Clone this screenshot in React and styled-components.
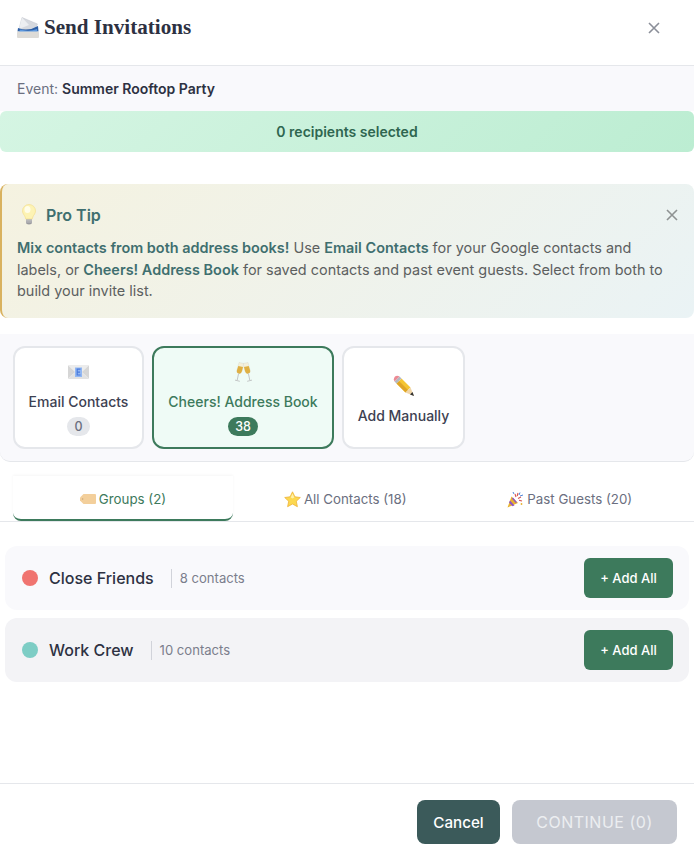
import React from "react";
import styled, { createGlobalStyle } from "styled-components";

const GlobalStyle = createGlobalStyle`
  html, body {
    margin: 0;
    padding: 0;
    background: #fff;
  }
  * {
    box-sizing: border-box;
  }
`;

const Modal = styled.div`
  width: 694px;
  height: 851px;
  display: flex;
  flex-direction: column;
  overflow: hidden;
  font-family: Inter, "Liberation Sans", sans-serif;
  color: #2d3142;
  background: #fff;
`;

const Header = styled.header`
  height: 66px;
  flex: none;
  display: flex;
  align-items: center;
  justify-content: space-between;
  padding: 0 34px 10px 17px;
  border-bottom: 1px solid #e5e7eb;
`;

const Title = styled.h1`
  display: flex;
  align-items: center;
  gap: 5px;
  margin: 0;
  font-family: "Liberation Serif", serif;
  font-size: 21.1px;
  font-weight: 700;
  color: #2d3142;
`;

const CloseButton = styled.button`
  display: flex;
  padding: 0;
  border: none;
  background: none;
  color: ${(p) => p.$color || "#8b8f99"};
`;

const EventBar = styled.div`
  height: 45px;
  flex: none;
  display: flex;
  align-items: center;
  gap: 4px;
  padding: 0 17px;
  background: #f9f9fc;
  font-size: 14px;
  color: #6b6f80;

  strong {
    font-weight: 600;
    color: #2d3142;
  }
`;

const RecipientBanner = styled.div`
  height: 41px;
  flex: none;
  display: flex;
  align-items: center;
  justify-content: center;
  border-radius: 6px;
  background: linear-gradient(135deg, #d5f5e3, #bcedd2);
  font-size: 14px;
  font-weight: 600;
  color: #2f6650;
`;

const TipCard = styled.section`
  height: 134px;
  flex: none;
  margin-top: 32px;
  padding: 8px 40px 0 15px;
  position: relative;
  border-left: 2px solid #d9b25f;
  border-radius: 8px;
  background: linear-gradient(135deg, #f5f2e0, #eaf3f5);
`;

const TipTitle = styled.div`
  display: flex;
  align-items: center;
  gap: 10px;
  height: 45px;
  padding-left: 5px;
  font-size: 16px;
  font-weight: 600;
  color: #3f6f6f;
`;

const TipText = styled.p`
  margin: 0;
  width: 650px;
  font-size: 14.45px;
  line-height: 21.6px;
  color: #5c6060;

  strong {
    font-weight: 600;
    color: #3f6f6f;
  }
`;

const TipClose = styled(CloseButton)`
  position: absolute;
  top: 25px;
  right: 16px;
`;

const SourcePanel = styled.div`
  height: 128px;
  flex: none;
  margin-top: 16px;
  display: flex;
  gap: 8px;
  padding: 12px 13px;
  background: #f9f9fc;
  border-bottom: 1px solid #e5e7eb;
  border-radius: 0 0 10px 10px;
`;

const SourceCard = styled.button`
  width: ${(p) => p.$width}px;
  height: 103px;
  display: flex;
  flex-direction: column;
  align-items: center;
  justify-content: center;
  padding: ${(p) => (p.$plain ? "5px 0 0" : "0")};
  border: 2px solid ${(p) => (p.$active ? "#3d7a5c" : "#e5e7eb")};
  border-radius: 12px;
  background: ${(p) => (p.$active ? "#effbf6" : "#fff")};
  font-family: inherit;
  font-size: 14px;
  font-weight: 500;
  color: ${(p) => (p.$active ? "#3d7a5c" : "#3d4152")};
`;

const SourceIcon = styled.span`
  height: 24px;
  display: flex;
  align-items: center;
  margin-bottom: 8px;
`;

const SourceLabel = styled.span`
  line-height: 20px;
`;

const Badge = styled.span`
  min-width: 23px;
  height: 19px;
  margin-top: 5px;
  padding: 0 7px;
  display: flex;
  align-items: center;
  justify-content: center;
  border-radius: 10px;
  font-size: 12.5px;
  color: ${(p) => (p.$active ? "#fff" : "#6b7080")};
  background: ${(p) => (p.$active ? "#3d7a5c" : "#e5e7eb")};
`;

const TabRow = styled.nav`
  height: 60px;
  flex: none;
  display: grid;
  grid-template-columns: 220px 1fr 1fr;
  align-items: end;
  padding: 0 12px 0 13px;
  border-bottom: 1px solid #e5e7eb;
`;

const Tab = styled.div`
  height: 45px;
  padding-top: 3px;
  display: flex;
  align-items: center;
  justify-content: center;
  gap: 3px;
  font-size: 13.3px;
  color: ${(p) => (p.$active ? "#3d7a5c" : "#6b6f80")};
  border-bottom: 2px solid ${(p) => (p.$active ? "#3d7a5c" : "transparent")};
  border-radius: 0 0 8px 8px;
  box-shadow: ${(p) => (p.$active ? "0 -1px 3px rgba(0,0,0,0.04)" : "none")};
`;

const GroupList = styled.div`
  flex: 1;
  display: flex;
  flex-direction: column;
  gap: 8px;
  padding: 24px 5px 0;
`;

const GroupRow = styled.div`
  height: 64px;
  display: flex;
  align-items: center;
  padding: 0 16px 0 17px;
  border-radius: 12px;
  background: ${(p) => (p.$shade ? "#f3f3f6" : "#f9f9fc")};
`;

const Dot = styled.span`
  width: 16px;
  height: 16px;
  flex: none;
  margin-right: 11px;
  border-radius: 50%;
  background: ${(p) => p.$color};
`;

const GroupName = styled.span`
  font-size: 16px;
  font-weight: 500;
  color: #2d3142;
`;

const GroupCount = styled.span`
  margin-left: 17px;
  padding-left: 8px;
  border-left: 1px solid #d1d3da;
  font-size: 13.1px;
  line-height: 19px;
  color: #7b7e8c;
`;

const AddAllButton = styled.button`
  width: 89px;
  height: 40px;
  margin-left: auto;
  border: none;
  border-radius: 6px;
  background: #3d7a5c;
  font-family: inherit;
  font-size: 13px;
  font-weight: 500;
  color: #fff;
`;

const Footer = styled.footer`
  height: 68px;
  flex: none;
  display: flex;
  justify-content: flex-end;
  gap: 12px;
  padding: 16px 17px 0;
  border-top: 1px solid #e5e7eb;
`;

const FooterButton = styled.button`
  height: 44px;
  width: ${(p) => p.$width}px;
  border: none;
  border-radius: 8px;
  font-family: inherit;
  font-size: ${(p) => (p.$disabled ? "16px" : "15.2px")};
  font-weight: ${(p) => (p.$disabled ? "400" : "500")};
  letter-spacing: ${(p) => (p.$disabled ? "0.5px" : "0")};
  color: ${(p) => (p.$disabled ? "#eceef1" : "#fff")};
  background: ${(p) => (p.$disabled ? "#c5c8d0" : "#3b5a5a")};
`;

const CloseIcon = ({ size = 12 }) => (
  <svg width={size} height={size} viewBox="0 0 12 12" fill="none" stroke="currentColor" strokeWidth="1.6">
    <path d="M1 1l10 10M11 1L1 11" />
  </svg>
);

const InboxIcon = () => (
  <svg width="22" height="21" viewBox="0 0 22 21">
    <path d="M5 0.5L20.500 7 17 14 2 12z" fill="#d5d8de" stroke="#bfc3ca" strokeWidth="0.5" />
    <path d="M5 0.500L12 8 2 12z" fill="#eceef1" />
    <path d="M1 11Q11 15 21 9L21.500 14.500H0.500z" fill="#2d5fa6" />
    <path d="M3 12.500Q12 15 20 12L20.500 15H2z" fill="#5e9ae0" />
    <rect x="0" y="14.500" width="22" height="6.500" rx="1" fill="#dddbd7" />
  </svg>
);

const BulbIcon = () => (
  <svg width="14" height="21" viewBox="0 0 14 21">
    <path d="M7 .5a6.500 6.500 0 0 0-6.500 6.500c0 2.600 1.800 3.800 2.700 6 .3.800.4 1.400.5 2h6.600c.1-.6.200-1.200.5-2 .9-2.200 2.700-3.400 2.700-6A6.500 6.500 0 0 0 7 .5z" fill="#fdf3b4" stroke="#f3dc85" strokeWidth="0.6" />
    <ellipse cx="5.500" cy="5.500" rx="3" ry="3.500" fill="#fffde8" />
    <path d="M4 15.500h6v2.800a3 2.200 0 0 1-6 0z" fill="#9a9a9e" />
    <path d="M4 16.700h6M4 18h6" stroke="#d6d6d8" strokeWidth="0.6" />
  </svg>
);

const EmailIcon = () => (
  <svg width="21" height="14" viewBox="0 0 21 14">
    <rect width="21" height="14" rx="1" fill="#ececec" />
    <path d="M0 .5l7 6.500-7 6.500zM21 .5l-7 6.500 7 6.500z" fill="#d6d6d6" />
    <path d="M0 14l7-6h7l7 6z" fill="#e2e2e2" />
    <rect x="7" y="2.500" width="7" height="9.500" fill="#92b7f2" />
    <path d="M12.500 4.200H9.200v5.800h3.300M9.200 7.100h2.800" stroke="#4a7bdc" strokeWidth="1.200" fill="none" />
  </svg>
);

const Flute = ({ mirrored }) => (
  <g transform={mirrored ? "translate(17 0) scale(-1 1)" : undefined}>
    <path d="M4 .5L8.800 1.500 7 9C6.500 11 5 12 3.500 11.500 2 11 1.500 9.500 2 8z" fill="#f4f1dc" stroke="#cfcdbd" strokeWidth="0.3" />
    <path d="M3.300 4L8 5 7 9C6.500 11 5 12 3.500 11.500 2 11 1.500 9.500 2 8z" fill="#dfb044" />
    <path d="M3.600 11.500L2.200 18.200M0 18.100L4.800 19.300" stroke="#c3c6c6" strokeWidth="1" fill="none" />
  </g>
);

const CheersIcon = () => (
  <svg width="17" height="20" viewBox="0 0 17 20">
    <Flute />
    <Flute mirrored />
  </svg>
);

const PencilIcon = () => (
  <svg width="22" height="22" viewBox="0 0 22 22">
    <path d="M8.500 3.500L17.500 12.500 12.500 17.500 3.500 8.500z" fill="#f5c531" />
    <path d="M6 6L15 15 12.500 17.500 3.500 8.500z" fill="#dfa526" />
    <path d="M17.500 12.500L21 21 12.500 17.500z" fill="#f0d5a8" />
    <path d="M19.500 17L21 21 17 19.500z" fill="#333" />
    <path d="M6.500 1.500L8.500 3.500 3.500 8.500 1.500 6.500z" fill="#b4b8c0" />
    <path d="M6.500 1.500Q4 -.2 2 1.500 0 4 1.500 6.500z" fill="#ec8a94" />
  </svg>
);

const TagIcon = () => (
  <svg width="16" height="10" viewBox="0 0 16 10">
    <path d="M3.500 0H15a1 1 0 0 1 1 1v8a1 1 0 0 1-1 1H3.500L0 6.500v-3z" fill="#f3cf9b" />
    <circle cx="2.600" cy="5" r="0.800" fill="#c9a877" />
  </svg>
);

const StarIcon = () => (
  <svg width="17" height="17" viewBox="0 0 17 17">
    <path d="M8.500.8l2.400 5 5.400.7-4 3.700 1.100 5.500-4.900-2.700-4.900 2.700 1.100-5.500-4-3.700 5.400-.7z" fill="#fcd84f" stroke="#eeb23a" strokeWidth="0.800" strokeLinejoin="round" />
    <path d="M8.500 2.500l1.800 4-1.800 1-1.800-1z" fill="#fff1a8" />
  </svg>
);

const PartyIcon = () => (
  <svg width="17" height="17" viewBox="0 0 17 17">
    <path d="M4.500 5.500L0.500 16.500l10.500-4.500z" fill="#e8b22e" />
    <path d="M3 9.500l4.500 5-2 .8-3.500-3.800zM6 6.500l4 4.800-1.300.6-3.800-4.500z" fill="#8e55c6" />
    <path d="M8 3l1 3M11 2l-.8 3M14 6l-3 1.500M15 10l-3-.8" stroke="#d9534f" strokeWidth="1.100" fill="none" />
    <path d="M6 1l1 2M13 1.500l-1 2.500M16 4l-3 1" stroke="#4f86d9" strokeWidth="1" fill="none" />
    <circle cx="14.500" cy="13" r="0.900" fill="#e8b22e" />
  </svg>
);

const sources = [
  { label: "Email Contacts", icon: <EmailIcon />, count: 0, width: 131 },
  { label: "Cheers! Address Book", icon: <CheersIcon />, count: 38, width: 182, active: true },
  { label: "Add Manually", icon: <PencilIcon />, width: 123 },
];

const tabs = [
  { label: "Groups (2)", icon: <TagIcon />, active: true },
  { label: "All Contacts (18)", icon: <StarIcon /> },
  { label: "Past Guests (20)", icon: <PartyIcon /> },
];

const groups = [
  { name: "Close Friends", count: "8 contacts", color: "#f07470" },
  { name: "Work Crew", count: "10 contacts", color: "#7dcdc5", shade: true },
];

export default function App() {
  return (
    <Modal>
      <GlobalStyle />
      <Header>
        <Title>
          <InboxIcon />
          Send Invitations
        </Title>
        <CloseButton>
          <CloseIcon />
        </CloseButton>
      </Header>
      <EventBar>
        Event: <strong>Summer Rooftop Party</strong>
      </EventBar>
      <RecipientBanner>0 recipients selected</RecipientBanner>
      <TipCard>
        <TipTitle>
          <BulbIcon />
          Pro Tip
        </TipTitle>
        <TipText>
          <strong>Mix contacts from both address books!</strong> Use <strong>Email Contacts</strong> for
          your Google contacts and labels, or <strong>Cheers! Address Book</strong> for saved contacts and
          past event guests. Select from both to build your invite list.
        </TipText>
        <TipClose $color="#8e9292">
          <CloseIcon />
        </TipClose>
      </TipCard>
      <SourcePanel>
        {sources.map((s) => (
          <SourceCard key={s.label} $width={s.width} $active={s.active} $plain={s.count === undefined}>
            <SourceIcon>{s.icon}</SourceIcon>
            <SourceLabel>{s.label}</SourceLabel>
            {s.count !== undefined && <Badge $active={s.active}>{s.count}</Badge>}
          </SourceCard>
        ))}
      </SourcePanel>
      <TabRow>
        {tabs.map((t) => (
          <Tab key={t.label} $active={t.active}>
            {t.icon}
            {t.label}
          </Tab>
        ))}
      </TabRow>
      <GroupList>
        {groups.map((g) => (
          <GroupRow key={g.name} $shade={g.shade}>
            <Dot $color={g.color} />
            <GroupName>{g.name}</GroupName>
            <GroupCount>{g.count}</GroupCount>
            <AddAllButton>+ Add All</AddAllButton>
          </GroupRow>
        ))}
      </GroupList>
      <Footer>
        <FooterButton $width={83}>Cancel</FooterButton>
        <FooterButton $width={165} $disabled>
          CONTINUE (0)
        </FooterButton>
      </Footer>
    </Modal>
  );
}
